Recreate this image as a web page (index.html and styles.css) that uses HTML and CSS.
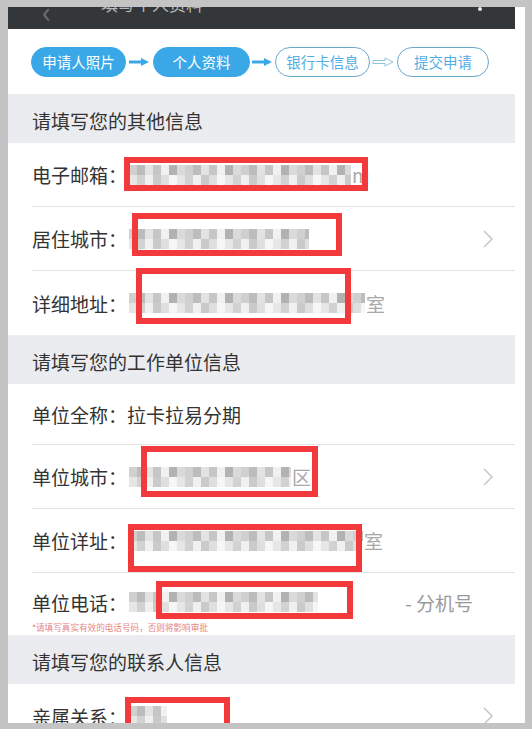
FILE: index.html
```html
<!DOCTYPE html>
<html lang="zh-CN">
<head>
    <meta charset="UTF-8">
    <meta name="viewport" content="width=device-width, initial-scale=1.0">
    <title>个人资料</title>
    <link rel="stylesheet" href="styles.css">
</head>
<body>
    <div class="screen">
        <div class="content">
            <!-- верхняя полоска, обрезана сверху -->
            <div class="topbar">
                <span class="back">‹</span>
                <span class="title">填写个人资料</span>
                <span class="dot"></span>
            </div>

            <!-- шаги -->
            <div class="steps">
                <span class="pill on">申请人照片</span>
                <svg class="arrow" width="27" height="10" viewBox="0 0 27 10"><path d="M3 5H17" stroke="#3aa8e6" stroke-width="3"/><path d="M15 1L23 5L15 9Z" fill="#3aa8e6"/></svg>
                <span class="pill on wide">个人资料</span>
                <svg class="arrow" width="25" height="10" viewBox="0 0 25 10"><path d="M2 5H16" stroke="#3aa8e6" stroke-width="3"/><path d="M14 1L22 5L14 9Z" fill="#3aa8e6"/></svg>
                <span class="pill">银行卡信息</span>
                <svg class="arrow" width="27" height="10" viewBox="0 0 27 10"><path d="M3 3.5H15V1L23 5L15 9V6.5H3Z" fill="none" stroke="#8cc3e0" stroke-width="1"/></svg>
                <span class="pill short">提交申请</span>
            </div>

            <div class="sec">请填写您的其他信息</div>
            <div class="row">
                <span class="label">电子邮箱：</span>
                <span class="blur b-email"></span><span class="tail">m</span>
                <span class="mark m-email"></span>
            </div>
            <div class="row">
                <span class="label">居住城市：</span>
                <span class="blur b-city"></span>
                <svg class="chev" width="12" height="20" viewBox="0 0 12 20"><path d="M2 2L10 10L2 18" fill="none" stroke="#c6c6c6" stroke-width="1.5"/></svg>
                <span class="mark m-city"></span>
            </div>
            <div class="row last">
                <span class="label">详细地址：</span>
                <span class="blur b-addr"></span><span class="tail">室</span>
                <span class="mark m-addr"></span>
            </div>

            <div class="sec">请填写您的工作单位信息</div>
            <div class="row name">
                <span class="label">单位全称：</span>
                <span class="val">拉卡拉易分期</span>
            </div>
            <div class="row">
                <span class="label">单位城市：</span>
                <span class="blur b-ucity"></span><span class="tail">区</span>
                <svg class="chev" width="12" height="20" viewBox="0 0 12 20"><path d="M2 2L10 10L2 18" fill="none" stroke="#c6c6c6" stroke-width="1.5"/></svg>
                <span class="mark m-ucity"></span>
            </div>
            <div class="row">
                <span class="label">单位详址：</span>
                <span class="blur b-uaddr"></span><span class="tail">室</span>
                <span class="mark m-uaddr"></span>
            </div>
            <div class="row last phone">
                <div class="line">
                    <span class="label">单位电话：</span>
                    <span class="blur b-phone"></span>
                    <span class="ext">- 分机号</span>
                </div>
                <div class="hint">*请填写真实有效的电话号码，否则将影响审批</div>
                <span class="mark m-phone"></span>
            </div>

            <div class="sec">请填写您的联系人信息</div>
            <div class="row last">
                <span class="label">亲属关系：</span>
                <span class="blur b-rel"></span>
                <svg class="chev" width="12" height="20" viewBox="0 0 12 20"><path d="M2 2L10 10L2 18" fill="none" stroke="#c6c6c6" stroke-width="1.5"/></svg>
                <span class="mark m-rel"></span>
            </div>
        </div>
    </div>
</body>
</html>
```

FILE: styles.css
```css
body {
    margin: 0;
    background-color: #c4c4c4; /* серая рамка скриншота */
    font-family: "Noto Sans CJK SC", "Noto Sans", sans-serif;
    color: #333;
}
.screen {
    margin: 7px 7px 0 8px;
    height: 716px;
    background-color: #fff;
    padding-right: 10px;
    overflow: hidden;
}
.content {
    width: 507px;
}
.topbar {
    height: 22px;
    background-color: #34373a;
    display: flex;
    align-items: flex-end;
    overflow: hidden;
}
.back {
    font-size: 30px;
    line-height: 30px;
    color: #6e7072;
    margin: 0 0 4px 34px;
}
.title {
    font-size: 17px;
    line-height: 22px;
    color: #b8babc;
    margin: 0 0 14px 50px;
}
.dot {
    width: 4px;
    height: 4px;
    border-radius: 2px;
    background-color: #e8e8e8;
    margin: 0 0 20px auto;
    margin-right: 33px;
    align-self: flex-start;
}
.steps {
    height: 65px;
    display: flex;
    align-items: center;
    padding-left: 23px;
}
.pill {
    box-sizing: border-box;
    width: 95px;
    height: 30px;
    border-radius: 15px;
    border: 1.5px solid #6aa9c9;
    color: #52aee2;
    font-size: 14.5px;
    display: flex;
    align-items: center;
    justify-content: center;
}
.pill.on {
    background-color: #3aa8e6;
    border-color: #3aa8e6;
    color: #fff;
}
.pill.wide {
    width: 97px;
}
.pill.short {
    width: 92px;
}
.arrow {
    flex: none;
}
.sec {
    height: 49px;
    background-color: #ebecef;
    padding-left: 24px;
    font-size: 19px;
    display: flex;
    align-items: center;
    padding-top: 3px;
    box-sizing: border-box;
}
.row {
    position: relative;
    box-sizing: border-box;
    height: 64px;
    margin-left: 24px;
    border-bottom: 1px solid #e3e3e3;
    display: flex;
    align-items: center;
    font-size: 19px;
}
.row.last {
    border-bottom: none;
}
.row.name {
    height: 61px;
}
.label {
    flex: none;
}
.val {
    color: #333;
}
/* мозаика на месте скрытых данных */
.blur {
    height: 20px;
    margin-left: 2px;
    background:
        repeating-linear-gradient(90deg, #d0d0d0 0 8px, #bcbcbc 8px 16px, #e3e3e3 16px 24px, #c6c6c6 24px 32px, #f1f1f1 32px 40px, #b2b2b2 40px 48px, #dadada 48px 56px) top / 100% 10px no-repeat,
        repeating-linear-gradient(90deg, #e6e6e6 0 8px, #d2d2d2 8px 16px, #f0f0f0 16px 24px, #cacaca 24px 32px, #dfdfdf 32px 40px, #f6f6f6 40px 48px) bottom / 100% 10px no-repeat;
}
.tail {
    color: #a8a8a8;
    margin-left: 1px;
}
.b-email { width: 222px; }
.b-city { width: 180px; }
.b-addr { width: 236px; }
.b-ucity { width: 162px; }
.b-uaddr { width: 234px; }
.b-phone { width: 189px; }
.b-rel { width: 38px; }
.chev {
    margin-left: auto;
    margin-right: 21px;
}
.mark {
    position: absolute; /* красная рамка поверх скрытых данных */
    box-sizing: border-box;
    border: 6px solid #f23a3c;
}
.m-email { left: 92px; top: 14px; width: 244px; height: 34px; }
.m-city { left: 100px; top: 6px; width: 210px; height: 43px; }
.m-addr { left: 104px; top: -3px; width: 215px; height: 56px; }
.m-ucity { left: 109px; top: 1px; width: 177px; height: 51px; }
.m-uaddr { left: 96px; top: 15px; width: 234px; height: 48px; }
.m-phone { left: 124px; top: 8px; width: 197px; height: 38px; }
.m-rel { left: 93px; top: 13px; width: 105px; height: 40px; }
.row.phone {
    height: 62px;
    flex-direction: column;
    align-items: stretch;
    padding-top: 14px;
}
.line {
    height: 30px;
    display: flex;
    align-items: center;
}
.ext {
    margin-left: auto;
    margin-right: 42px;
    color: #9a9a9a;
}
.hint {
    margin-top: 4px;
    font-size: 8.6px;
    line-height: 12px;
    color: #e58585;
}
```
